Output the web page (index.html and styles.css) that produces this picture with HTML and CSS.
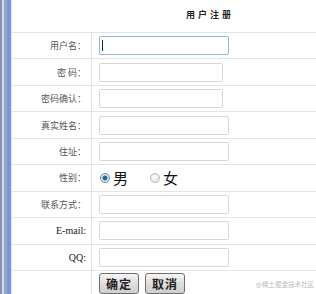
FILE: index.html
```html
<!DOCTYPE html>
<html lang="zh-CN">
<head>
    <meta charset="UTF-8">
    <title>用户注册</title>
    <link rel="stylesheet" href="styles.css">
</head>
<body>
    <div class="page">
        <!-- Left frame strip -->
        <div class="sidebar"></div>

        <!-- Register form -->
        <div class="form">
            <div class="title">用户注册</div>

            <div class="row">
                <div class="label">用户名：</div>
                <div class="field"><span class="input focused"><span class="caret"></span></span></div>
            </div>
            <div class="row">
                <div class="label">密 码：</div>
                <div class="field"><span class="input short"></span></div>
            </div>
            <div class="row">
                <div class="label">密码确认：</div>
                <div class="field"><span class="input short"></span></div>
            </div>
            <div class="row">
                <div class="label">真实姓名：</div>
                <div class="field"><span class="input"></span></div>
            </div>
            <div class="row">
                <div class="label">住址：</div>
                <div class="field"><span class="input"></span></div>
            </div>
            <div class="row">
                <div class="label">性别：</div>
                <div class="field gender">
                    <span class="radio checked"></span><span class="sex">男</span>
                    <span class="radio"></span><span class="sex">女</span>
                </div>
            </div>
            <div class="row">
                <div class="label">联系方式：</div>
                <div class="field"><span class="input"></span></div>
            </div>
            <div class="row">
                <div class="label latin">E-mail:</div>
                <div class="field"><span class="input"></span></div>
            </div>
            <div class="row">
                <div class="label latin">QQ:</div>
                <div class="field"><span class="input"></span></div>
            </div>
            <div class="row last">
                <div class="label"></div>
                <div class="field buttons">
                    <span class="btn">确定</span>
                    <span class="btn">取消</span>
                </div>
            </div>
        </div>
    </div>

    <div class="watermark">@稀土掘金技术社区</div>
</body>
</html>
```

FILE: styles.css
```css
/* General Reset */
* {
    margin: 0;
    padding: 0;
    box-sizing: border-box;
}

body {
    font-family: 'Noto Sans CJK SC', sans-serif;
    background: #fff;
    color: #333;
    width: 316px;
    height: 294px;
    overflow: hidden;
    position: relative;
}

.page {
    display: flex;
    height: 294px;
}

/* Left frame strip */
.sidebar {
    width: 12px;
    flex-shrink: 0;
    background: linear-gradient(to right,
        #8494b0 0, #8494b0 2px,
        #d3dae8 2px, #d3dae8 4px,
        #9aa6c6 4px, #9aa6c6 7px,
        #7c93de 7px, #7c93de 11px,
        #e4e8f0 11px, #e4e8f0 12px);
}

/* Form table */
.form {
    flex: 1;
    min-width: 0;
}

.title {
    height: 32px;
    line-height: 30px;
    text-align: center;
    padding-left: 92px;
    font-size: 9px;
    font-weight: bold;
    letter-spacing: 3px;
    color: #222;
}

.row {
    display: grid;
    grid-template-columns: 80px 1fr;
    height: 26.45px;
    border-top: 1px solid #e4e4e4;
}

.row.last {
    height: 30px;
}

.label {
    border-right: 1px solid #e4e4e4;
    padding-right: 5px;
    font-size: 9px;
    color: #555;
    display: flex;
    align-items: center;
    justify-content: flex-end;
}

.label.latin {
    font-family: 'Liberation Serif', serif;
    font-size: 10px;
    color: #222;
}

.field {
    display: flex;
    align-items: center;
    padding-left: 7px;
}

/* Text inputs */
.input {
    display: block;
    width: 130px;
    height: 19px;
    border: 1px solid #d6d6d6;
    border-radius: 2px;
    background: #fff;
    position: relative;
}

.input.short {
    width: 124px;
}

.input.focused {
    border-color: #8fb8e0;
}

.caret {
    position: absolute;
    left: 2px;
    top: 3px;
    width: 1px;
    height: 11px;
    background: #222;
}

/* Gender radios */
.gender {
    padding-left: 8px;
}

.radio {
    width: 10px;
    height: 10px;
    border-radius: 50%;
    border: 1px solid #b8b8b8;
    background: radial-gradient(circle at 40% 40%, #fff, #d8d8d8);
}

.radio.checked {
    border-color: #6a8aa8;
    background: radial-gradient(circle, #1f5f8f 0, #2a6c9a 2px, #e8f0f6 3px, #c8d6e2 5px);
}

.sex {
    font-size: 15px;
    color: #111;
    margin-left: 3px;
    margin-right: 22px;
    line-height: 1;
}

/* Buttons */
.buttons {
    align-items: flex-start;
    padding-top: 2px;
    gap: 6px;
}

.btn {
    width: 40px;
    height: 21px;
    border: 1px solid #6f6f6f;
    border-radius: 3px;
    background: linear-gradient(#f6f6f6, #dedede 50%, #cfcfcf);
    font-size: 12px;
    font-weight: bold;
    color: #222;
    text-align: center;
    line-height: 19px;
    letter-spacing: 1px;
}

.watermark {
    position: absolute;
    right: 2px;
    top: 279px;
    font-size: 6.5px;
    color: #bbb;
    white-space: nowrap;
}
```
